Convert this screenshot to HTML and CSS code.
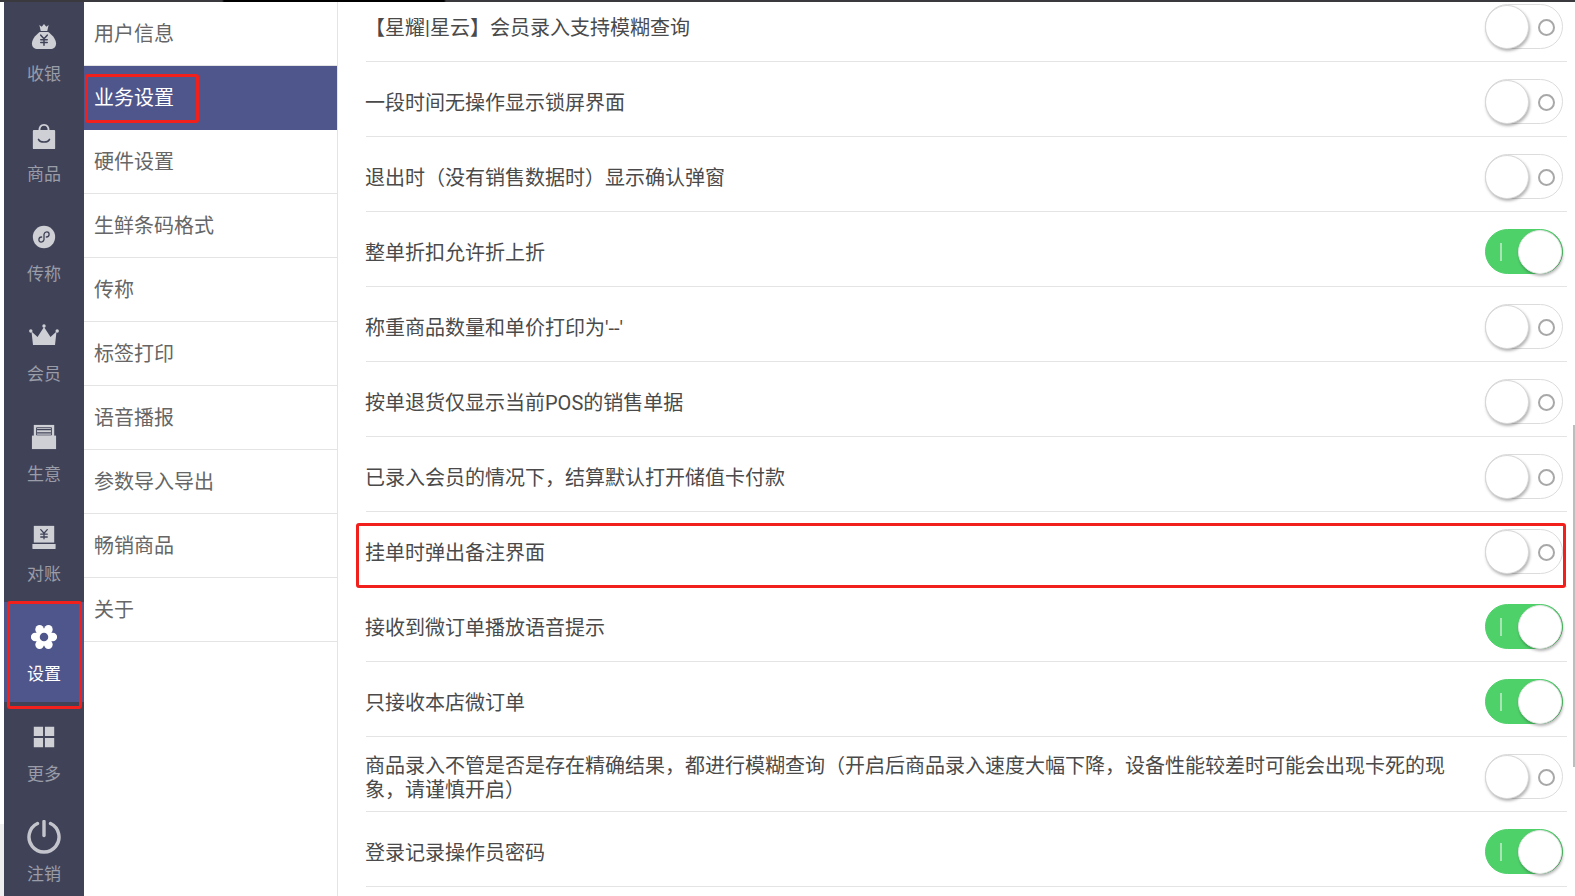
FILE: index.html
```html
<!DOCTYPE html>
<html lang="zh-CN">
<head>
    <meta charset="UTF-8">
    <title>业务设置</title>
    <link rel="stylesheet" href="styles.css">
</head>
<body>
    <div class="top-bar"></div>
    <div class="app">
        <div class="edge"></div>

        <!-- main nav -->
        <div class="side-nav">
            <div class="nav-item">
                <svg viewBox="0 0 28 28" class="nav-icon"><path d="M9 1l2.500 2L14 0l2.500 3L19 1l-1.500 6.500h-7z"/><path d="M9.500 8.500h9c3 2 8.500 7 8.500 12.500 0 4-3 6-6 6H7c-3 0-6-2-6-6 0-5.500 5.500-10.500 8.500-12.500z"/><path d="M10.500 12l3.500 4 3.500-4M14 16v7M10.500 17h7M10.500 20h7" class="cut"/></svg>
                <span>收银</span>
            </div>
            <div class="nav-item">
                <svg viewBox="0 0 28 28" class="nav-icon"><path d="M9 7.500C9 3 11 1 14 1s5 2 5 6.500" class="ring"/><path d="M3 6.500h22a1 1 0 0 1 1 1V26a1 1 0 0 1-1 1H3a1 1 0 0 1-1-1V7.500a1 1 0 0 1 1-1z"/><path d="M8 16.500c2 4 10 4 12 0" class="cut"/></svg>
                <span>商品</span>
            </div>
            <div class="nav-item">
                <svg viewBox="0 0 28 28" class="nav-icon"><circle cx="14" cy="14" r="12"/><path d="M8.500 17c0 3 4.500 3.500 5.500 0v-6c1-3.500 5.500-3 5.500 0 0 2-1.500 3-3 3M11.500 14c-1.500 0-3 1-3 3" class="cut thin"/></svg>
                <span>传称</span>
            </div>
            <div class="nav-item">
                <svg viewBox="0 0 30 28" class="nav-icon crown"><circle cx="1.800" cy="8" r="1.700"/><circle cx="15" cy="3" r="1.700"/><circle cx="28.200" cy="8" r="1.700"/><path d="M2.500 8.500l6 5.500L15 4l6.500 10 6-5.500L26 22H4z"/></svg>
                <span>会员</span>
            </div>
            <div class="nav-item">
                <svg viewBox="0 0 28 28" class="nav-icon"><path d="M3 1h22v12H3z"/><path d="M6 4h16v8H6z" class="hole"/><path d="M7 6h14M7 9.500h14" class="cut thin"/><path d="M1 12.500h26V27H1z"/></svg>
                <span>生意</span>
            </div>
            <div class="nav-item">
                <svg viewBox="0 0 28 28" class="nav-icon"><path d="M3 2h22v18H3z"/><path d="M1.500 21.500h25V26a1 1 0 0 1-1 1h-23a1 1 0 0 1-1-1z"/><path d="M10.500 6l3.500 4 3.500-4M14 10v6M10.500 11h7M10.500 14h7" class="cut thin"/></svg>
                <span>对账</span>
            </div>
            <div class="nav-item active">
                <svg viewBox="0 0 28 28" class="nav-icon gear">
                    <circle cx="23.500" cy="14" r="4.600"/><circle cx="4.500" cy="14" r="4.600"/>
                    <circle cx="18.750" cy="5.800" r="4.600"/><circle cx="9.250" cy="5.800" r="4.600"/>
                    <circle cx="18.750" cy="22.200" r="4.600"/><circle cx="9.250" cy="22.200" r="4.600"/>
                    <circle cx="14" cy="14" r="9.500"/>
                    <circle cx="14" cy="14" r="4.600" class="gear-hole"/>
                </svg>
                <span>设置</span>
            </div>
            <div class="nav-item">
                <svg viewBox="0 0 28 28" class="nav-icon"><path d="M3 3h10v10H3zM15 3h10v10H15zM3 15h10v10H3zM15 15h10v10H15z"/></svg>
                <span>更多</span>
            </div>
            <div class="nav-item">
                <svg viewBox="0 0 34 34" class="nav-icon power"><path d="M10.500 3.500a15 15 0 1 0 13 0" class="stroke"/><path d="M17 1.500v14" class="stroke"/></svg>
                <span>注销</span>
            </div>
        </div>

        <!-- settings menu -->
        <div class="sub-menu">
            <div class="menu-item">用户信息</div>
            <div class="menu-item selected">业务设置</div>
            <div class="menu-item">硬件设置</div>
            <div class="menu-item">生鲜条码格式</div>
            <div class="menu-item">传称</div>
            <div class="menu-item">标签打印</div>
            <div class="menu-item">语音播报</div>
            <div class="menu-item">参数导入导出</div>
            <div class="menu-item">畅销商品</div>
            <div class="menu-item">关于</div>
        </div>

        <!-- settings list, scrolled a little -->
        <div class="settings">
            <div class="settings-list">
                <div class="row"><p>【星耀|星云】会员录入支持模糊查询</p><div class="switch"></div></div>
                <div class="row"><p>一段时间无操作显示锁屏界面</p><div class="switch"></div></div>
                <div class="row"><p>退出时（没有销售数据时）显示确认弹窗</p><div class="switch"></div></div>
                <div class="row"><p>整单折扣允许折上折</p><div class="switch on"></div></div>
                <div class="row"><p>称重商品数量和单价打印为'--'</p><div class="switch"></div></div>
                <div class="row"><p>按单退货仅显示当前POS的销售单据</p><div class="switch"></div></div>
                <div class="row"><p>已录入会员的情况下，结算默认打开储值卡付款</p><div class="switch"></div></div>
                <div class="row"><p>挂单时弹出备注界面</p><div class="switch"></div></div>
                <div class="row"><p>接收到微订单播放语音提示</p><div class="switch on"></div></div>
                <div class="row"><p>只接收本店微订单</p><div class="switch on"></div></div>
                <div class="row"><p>商品录入不管是否是存在精确结果，都进行模糊查询（开启后商品录入速度大幅下降，设备性能较差时可能会出现卡死的现象，请谨慎开启）</p><div class="switch"></div></div>
                <div class="row"><p>登录记录操作员密码</p><div class="switch on"></div></div>
            </div>
            <div class="scroll-thumb"></div>
        </div>
    </div>

    <!-- red annotation boxes -->
    <div class="mark mark-menu"></div>
    <div class="mark mark-nav"></div>
    <div class="mark mark-row"></div>
</body>
</html>
```

FILE: styles.css
```css
* {
    box-sizing: border-box;
    margin: 0;
    padding: 0;
    font-family: Roboto, "Noto Sans CJK SC", sans-serif;
}

html, body {
    width: 1575px;
    height: 896px;
    overflow: hidden;
    background: #fff;
}

body {
    position: relative;
    display: flex;
    flex-direction: column;
}

.top-bar {
    height: 2px;
    flex: none;
    background: linear-gradient(to right, #3a3a3e 0, #3a3a3e 222px, #000 224px, #000 444px, #3a3a3e 446px);
}

.app {
    flex: 1;
    display: flex;
    min-height: 0;
}

.edge {
    width: 4px;
    flex: none;
    background: linear-gradient(to bottom, #fff 822px, #efefef 822px);
}

.side-nav {
    width: 80px;
    flex: none;
    background: #404358;
}

.nav-item {
    height: 100px;
    display: flex;
    flex-direction: column;
    align-items: center;
    color: #9a9ca8;
    font-size: 17px;
    line-height: 24px;
}

.nav-item span {
    margin-top: 12px;
}

.nav-icon {
    display: block;
    width: 26px;
    height: 26px;
    margin-top: 22px;
    fill: #cfd0d6;
}

.crown {
    width: 30px;
    height: 28px;
    margin-top: 21px;
    margin-bottom: -1px;
}

.power {
    width: 34px;
    height: 34px;
    margin-top: 18px;
    margin-bottom: -4px;
}

.stroke {
    fill: none;
    stroke: #c4c5cc;
    stroke-width: 3.4;
    stroke-linecap: round;
}

.cut {
    fill: none;
    stroke: #404358;
    stroke-width: 1.6;
    stroke-linecap: round;
    stroke-linejoin: round;
}

.thin {
    stroke-width: 1.4;
}

.ring {
    fill: none;
    stroke: #cfd0d6;
    stroke-width: 2;
}

.hole {
    fill: #cfd0d6;
    stroke: #404358;
    stroke-width: 1;
}

.nav-item.active {
    background: #4f568b;
    color: #fff;
}

.nav-item.active .nav-icon {
    fill: #fff;
}

.nav-item.active .gear-hole {
    fill: #4f568b;
}

.sub-menu {
    width: 254px;
    flex: none;
    border-right: 1px solid #e4e4e4;
}

.menu-item {
    height: 64px;
    padding-left: 10px;
    padding-bottom: 3px;
    display: flex;
    align-items: center;
    font-size: 20px;
    color: #666;
    border-bottom: 1px solid #e4e4e4;
}

.menu-item.selected {
    background: #4f568b;
    color: #fff;
    border-bottom-color: #4f568b;
}

.settings {
    flex: 1;
    position: relative;
    overflow: hidden;
    padding: 0 8px 0 28px;
}

.settings-list {
    margin-top: -15px;
}

.row {
    height: 75px;
    display: flex;
    align-items: center;
    justify-content: space-between;
    border-bottom: 1px solid #e4e4e4;
    padding-top: 5px;
    padding-right: 4px;
}

.row p {
    flex: 1;
    margin-left: -1px;
    margin-right: 30px;
    padding-top: 3px;
    font-size: 20px;
    line-height: 24px;
    color: #4a4a4a;
}

.switch {
    position: relative;
    width: 78px;
    height: 45px;
    flex: none;
    border: 1.5px solid #dcdcdc;
    border-radius: 23px;
    background: #fff;
}

/* knob */
.switch::before {
    content: "";
    position: absolute;
    left: -1px;
    top: 0;
    width: 42px;
    height: 42px;
    border-radius: 50%;
    background: #fff;
    border: 1px solid #d8d8d8;
    box-shadow: 1px 2px 3px rgba(0, 0, 0, 0.3);
}

/* off marker */
.switch::after {
    content: "";
    position: absolute;
    right: 7px;
    top: 14px;
    width: 13px;
    height: 13px;
    border: 2.5px solid #a8a8a8;
    border-radius: 50%;
}

.switch.on {
    background: #4fd16a;
    border-color: #4fd16a;
}

.switch.on::before {
    left: auto;
    right: 0;
    border-color: #e6e6e6;
}

.switch.on::after {
    left: 14px;
    right: auto;
    top: 13px;
    width: 2px;
    height: 18px;
    border: 0;
    border-radius: 0;
    background: #a8e6b5;
}

.scroll-thumb {
    position: absolute;
    right: 0;
    top: 423px;
    width: 2px;
    height: 342px;
    background: #bdbdbd;
}

.mark {
    position: absolute;
    border: 3px solid #f2201c;
    border-radius: 3px;
}

.mark-menu {
    left: 85px;
    top: 74px;
    width: 114px;
    height: 49px;
}

.mark-nav {
    left: 7px;
    top: 601px;
    width: 75px;
    height: 108px;
}

.mark-row {
    left: 356px;
    top: 523px;
    width: 1210px;
    height: 65px;
}
```
